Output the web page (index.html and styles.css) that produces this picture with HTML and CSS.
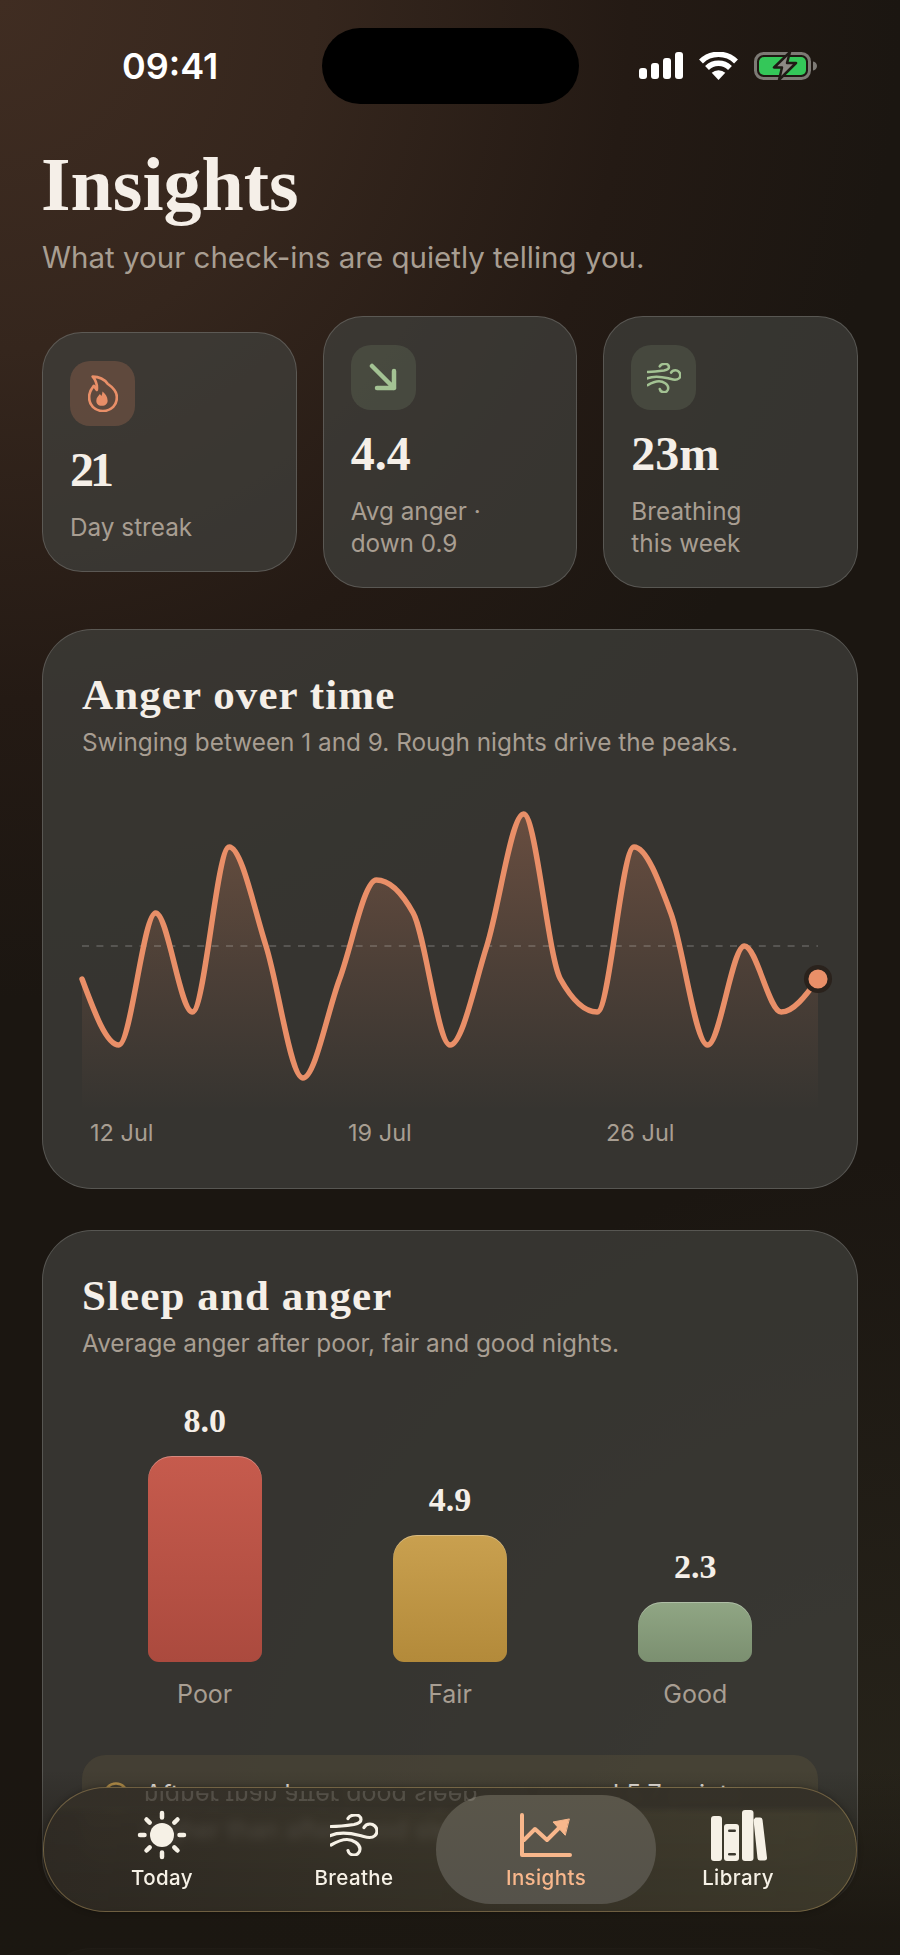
FILE: index.html
```html
<!DOCTYPE html>
<html lang="en">
<head>
    <meta charset="UTF-8">
    <meta name="viewport" content="width=device-width, initial-scale=1.0">
    <title>Insights</title>
    <link rel="stylesheet" href="styles.css">
</head>
<body>
    <div class="screen">
        <div class="status">
            <div class="time">09:41</div>
            <div class="island"></div>
            <div class="status-icons">
                <svg width="44" height="28" viewBox="0 0 44 28" fill="#fff">
                    <rect x="0" y="16" width="8" height="11" rx="3"/>
                    <rect x="12" y="11" width="8" height="16" rx="3"/>
                    <rect x="24" y="6" width="8" height="21" rx="3"/>
                    <rect x="36" y="0" width="8" height="27" rx="3"/>
                </svg>
                <svg width="39" height="28" viewBox="0 0 39 28" fill="none" stroke="#fff">
                    <path d="M2 9.5a25 25 0 0 1 35 0" stroke-width="5.5"/>
                    <path d="M8 16a16.500 16.500 0 0 1 23 0" stroke-width="5.500"/>
                    <path d="M19.500 28l-6.800-7.200a10 10 0 0 1 13.600 0z" fill="#fff" stroke="none"/>
                </svg>
                <svg width="63" height="28" viewBox="0 0 63 28" fill="none">
                    <rect x="1.500" y="1.500" width="54" height="25" rx="8" stroke="#7d7a75" stroke-width="3"/>
                    <rect x="5" y="5" width="47" height="18" rx="5" fill="#34c759"/>
                    <path d="M59 9.500c2.500.5 4 2.300 4 4.500s-1.500 4-4 4.500z" fill="#7d7a75"/>
                    <path d="M36 0L20 15.500h8L25 28l17-17h-9z" fill="#8d8a85" stroke="#1f1a15" stroke-width="2.500" stroke-linejoin="round"/>
                </svg>
            </div>
        </div>

        <div class="content">
            <h1 class="page-title">Insights</h1>
            <p class="page-sub">What your check-ins are quietly telling you.</p>

            <div class="stats">
                <div class="stat">
                    <div class="stat-icon orange">
                        <svg width="30" height="37" viewBox="0 0 29 36" fill="none" stroke="#e98f68" stroke-width="2.600" stroke-linejoin="round">
                            <path d="M14.500 35C6 35 1 29 1 21.500C1 17 3 13.500 5.500 10.500L8.500 14.500C9 10 7.500 5 4.500 1.500C12 1.500 16.500 5 19 8.500C24 12 28 16 28 21.500C28 29 23 35 14.500 35Z"/>
                            <path d="M13.500 30C9.500 30 8 27.500 8 25C8 22 10 20.500 11.500 18.500L13 20.500C13.500 19 14 17.500 14 16C16.500 18 19 21 19 25C19 27.500 17 30 13.500 30Z" fill="#e98f68" stroke="none"/>
                        </svg>
                    </div>
                    <div class="stat-value tight">21</div>
                    <div class="stat-label">Day streak</div>
                </div>
                <div class="stat">
                    <div class="stat-icon green">
                        <svg width="30" height="30" viewBox="0 0 30 30" fill="none" stroke="#a3c293" stroke-width="4.500" stroke-linecap="round" stroke-linejoin="round">
                            <path d="M4 3L26 25M26 8V25H9"/>
                        </svg>
                    </div>
                    <div class="stat-value">4.4</div>
                    <div class="stat-label">Avg anger ·<br>down 0.9</div>
                </div>
                <div class="stat">
                    <div class="stat-icon green">
                        <svg width="34" height="30" viewBox="0 0 48 42" fill="none" stroke="#a3c293" stroke-width="3.600" stroke-linecap="round">
                            <path d="M1 12.500C8 12.500 14 12 24 10.500C29 9.500 31 7.500 31 5.500C31 2.500 28 1 25.500 1C22 1 19 2.500 18 4.500"/>
                            <path d="M.5 21.500C10 17.500 22 19.500 30 21.500C34 22.500 37 23.500 39.500 23.500C44 23.500 47 20.500 47 17C47 13 43.500 10 40 10C37 10 35 11.500 34 13.500"/>
                            <path d="M1 31C7 27.500 12 25.500 17 25.500C23 25.500 30 30 30 35C30 38.500 27 41 24 41C21 41 18.500 39 18 36.500"/>
                        </svg>
                    </div>
                    <div class="stat-value">23m</div>
                    <div class="stat-label">Breathing<br>this week</div>
                </div>
            </div>

            <section class="card">
                <h2 class="card-title">Anger over time</h2>
                <p class="card-sub">Swinging between 1 and 9. Rough nights drive the peaks.</p>
                <svg class="line-chart" width="736" height="310" viewBox="0 0 736 310" fill="none">
                    <defs>
                        <linearGradient id="area" x1="0" y1="0" x2="0" y2="1">
                            <stop offset="0" stop-color="#e98f68" stop-opacity="0.28"/>
                            <stop offset="0.5" stop-color="#e98f68" stop-opacity="0.13"/>
                            <stop offset="1" stop-color="#e98f68" stop-opacity="0"/>
                        </linearGradient>
                    </defs>
                    <path fill="url(#area)" d="M0 178C12.270 211 24.530 244 36.800 244C49.070 244 61.330 112 73.600 112C85.870 112 98.130 211 110.400 211C122.670 211 134.930 46 147.200 46C159.470 46 171.730 106.500 184 145C196.270 183.500 208.530 277 220.800 277C233.070 277 245.330 211 257.600 178C269.870 145 282.130 79 294.400 79C306.670 79 318.930 90 331.200 112C343.470 134 355.730 244 368 244C380.270 244 392.530 183.500 404.800 145C417.070 106.500 429.330 13 441.600 13C453.870 13 466.130 156 478.400 178C490.670 200 502.930 211 515.200 211C527.470 211 539.730 46 552 46C564.270 46 576.530 79 588.800 112C601.070 145 613.330 244 625.600 244C637.870 244 650.130 145 662.400 145C674.670 145 686.930 211 699.200 211C711.470 211 723.730 194.500 736 178L736 310L0 310Z"/>
                    <line x1="0" y1="145" x2="736" y2="145" stroke="#fff" stroke-opacity="0.22" stroke-width="1.500" stroke-dasharray="7 7.400"/>
                    <path stroke="#e98f68" stroke-width="5.500" stroke-linecap="round" d="M0 178C12.270 211 24.530 244 36.800 244C49.070 244 61.330 112 73.600 112C85.870 112 98.130 211 110.400 211C122.670 211 134.930 46 147.200 46C159.470 46 171.730 106.500 184 145C196.270 183.500 208.530 277 220.800 277C233.070 277 245.330 211 257.600 178C269.870 145 282.130 79 294.400 79C306.670 79 318.930 90 331.200 112C343.470 134 355.730 244 368 244C380.270 244 392.530 183.500 404.800 145C417.070 106.500 429.330 13 441.600 13C453.870 13 466.130 156 478.400 178C490.670 200 502.930 211 515.200 211C527.470 211 539.730 46 552 46C564.270 46 576.530 79 588.800 112C601.070 145 613.330 244 625.600 244C637.870 244 650.130 145 662.400 145C674.670 145 686.930 211 699.200 211C711.470 211 723.730 194.500 736 178"/>
                    <circle cx="736" cy="178" r="11.800" fill="#e98f68" stroke="#2a221c" stroke-width="4.500"/>
                </svg>
                <div class="axis">
                    <span>12 Jul</span>
                    <span>19 Jul</span>
                    <span>26 Jul</span>
                </div>
            </section>

            <section class="card">
                <h2 class="card-title">Sleep and anger</h2>
                <p class="card-sub">Average anger after poor, fair and good nights.</p>
                <div class="bars">
                    <div class="bar-col">
                        <div class="bar-value">8.0</div>
                        <div class="bar poor" style="height: 206px"></div>
                        <div class="bar-label">Poor</div>
                    </div>
                    <div class="bar-col">
                        <div class="bar-value">4.9</div>
                        <div class="bar fair" style="height: 127px"></div>
                        <div class="bar-label">Fair</div>
                    </div>
                    <div class="bar-col">
                        <div class="bar-value">2.3</div>
                        <div class="bar good" style="height: 60px"></div>
                        <div class="bar-label">Good</div>
                    </div>
                </div>
                <div class="callout">
                    <svg class="callout-icon" width="26" height="26" viewBox="0 0 26 26" fill="none" stroke="#b8924a" stroke-width="2.500">
                        <circle cx="13" cy="13" r="11.500"/>
                    </svg>
                    <p class="callout-text">After poor sleep your anger runs around 5.7 points higher than after good sleep.</p>
                </div>
            </section>

            <section class="card card-next"></section>
        </div>

        <div class="fade"></div>

        <nav class="tabbar">
            <div class="refract" aria-hidden="true"><span>higher than after good sleep</span></div>
            <a class="tab">
                <span class="tab-icon">
                    <svg width="50" height="50" viewBox="0 0 50 50" fill="#f6f1e6" stroke="#f6f1e6" stroke-width="4.500" stroke-linecap="round">
                        <circle cx="25" cy="25" r="12" stroke="none"/>
                        <path d="M25 3V7.500M25 42.500V47M3 25H7.500M42.500 25H47M9.500 9.500L12.700 12.700M37.300 37.300L40.500 40.500M9.500 40.500L12.700 37.300M37.300 12.700L40.500 9.500"/>
                    </svg>
                </span>
                <span class="tab-label">Today</span>
            </a>
            <a class="tab">
                <span class="tab-icon">
                    <svg width="48" height="42" viewBox="0 0 48 42" fill="none" stroke="#f6f1e6" stroke-width="3.200" stroke-linecap="round">
                        <path d="M1 12.500C8 12.500 14 12 24 10.500C29 9.500 31 7.500 31 5.500C31 2.500 28 1 25.500 1C22 1 19 2.500 18 4.500"/>
                        <path d="M.5 21.500C10 17.500 22 19.500 30 21.500C34 22.500 37 23.500 39.500 23.500C44 23.500 47 20.500 47 17C47 13 43.500 10 40 10C37 10 35 11.500 34 13.500"/>
                        <path d="M1 31C7 27.500 12 25.500 17 25.500C23 25.500 30 30 30 35C30 38.500 27 41 24 41C21 41 18.500 39 18 36.500"/>
                    </svg>
                </span>
                <span class="tab-label">Breathe</span>
            </a>
            <a class="tab active">
                <span class="tab-icon">
                    <svg width="52" height="44" viewBox="0 0 52 44" fill="none" stroke="#f8b78c" stroke-width="4" stroke-linecap="round" stroke-linejoin="round">
                        <path d="M2 2V42H50"/>
                        <path d="M4 27L15 16L27 27L41 13"/>
                        <path d="M49 6L33 9L45 22Z" fill="#f8b78c" stroke-width="1"/>
                    </svg>
                </span>
                <span class="tab-label">Insights</span>
            </a>
            <a class="tab">
                <span class="tab-icon">
                    <svg width="57" height="51" viewBox="0 0 57 51" fill="#f6f1e6">
                        <rect x="1" y="6" width="11" height="45" rx="3"/>
                        <path d="M17 14h9a3 3 0 0 1 3 3v31a3 3 0 0 1-3 3h-9a3 3 0 0 1-3-3V17a3 3 0 0 1 3-3z"/>
                        <rect x="32" y="0" width="11.500" height="51" rx="3"/>
                        <path d="M45.500 7.500h4.500a2.500 2.500 0 0 1 2.500 2.200L57 47.800a2.500 2.500 0 0 1-2.400 2.700H50a2.500 2.500 0 0 1-2.500-2.200L43.500 9.800z"/>
                        <rect x="18" y="19.500" width="8" height="2.600" rx="1.300" fill="#3b382e"/>
                        <rect x="18" y="43" width="8" height="2.600" rx="1.300" fill="#3b382e"/>
                    </svg>
                </span>
                <span class="tab-label">Library</span>
            </a>
        </nav>
    </div>
</body>
</html>
```

FILE: styles.css
```css
* {
    box-sizing: border-box;
}
body {
    margin: 0;
    background: #1b1611;
    font-family: 'Inter', 'Noto Sans', sans-serif;
    color: #f5efe8;
}
.screen {
    position: relative;
    width: 900px;
    height: 1955px;
    overflow: hidden;
    background:
        radial-gradient(ellipse 900px 1000px at 0 0, #402d22 0%, #35261d 35%, #241a14 70%, rgba(28, 23, 18, 0) 100%),
        radial-gradient(ellipse 700px 800px at 100% 100%, #29261c 0%, rgba(28, 23, 18, 0) 100%),
        #1b1611;
}

/* status bar */
.status {
    display: grid;
    grid-template-columns: 322px 257px 1fr;
    padding-top: 28px;
    height: 103px;
}
.time {
    padding-left: 122px;
    font-size: 36px;
    font-weight: 600;
    line-height: 76px;
    color: #fff;
}
.island {
    background: #000;
    border-radius: 38px;
}
.status-icons {
    display: flex;
    align-items: flex-start;
    gap: 16px;
    padding: 24px 0 0 60px;
}

.content {
    padding: 0 42px;
}
.page-title {
    margin: 39px 0 0 -1px;
    font-family: 'Liberation Serif', serif;
    font-size: 76px;
    font-weight: 700;
    line-height: 84px;
}
.page-sub {
    margin: 11px 0 0;
    font-size: 29.5px;
    line-height: 40px;
    color: #a89e92;
}

/* stat cards */
.stats {
    display: flex;
    align-items: center;
    gap: 26px;
    margin-top: 39px;
}
.stat {
    flex: 1;
    padding: 28px 27px;
    background: rgba(63, 63, 60, 0.74);
    border: 1.5px solid rgba(255, 255, 255, 0.17);
    border-radius: 40px;
}
.stat-icon {
    display: flex;
    align-items: center;
    justify-content: center;
    width: 65px;
    height: 65px;
    border-radius: 20px;
}
.stat-icon.orange {
    background: rgba(233, 143, 104, 0.2);
}
.stat-icon.green {
    background: rgba(163, 194, 147, 0.14);
}
.stat-value {
    margin-top: 18px;
    font-family: 'Liberation Serif', serif;
    font-size: 48px;
    font-weight: 700;
    line-height: 52px;
}
.stat-value.tight {
    letter-spacing: -4px;
}
.stat-label {
    margin-top: 15px;
    font-size: 24.3px;
    line-height: 32px;
    color: #a89e92;
}

/* big cards */
.card {
    margin-top: 41px;
    padding: 40px 39px;
    background: rgba(63, 63, 60, 0.74);
    border: 1.5px solid rgba(255, 255, 255, 0.17);
    border-radius: 50px;
}
.card-title {
    margin: 0;
    font-family: 'Liberation Serif', serif;
    font-size: 43px;
    font-weight: 700;
    line-height: 50px;
    letter-spacing: 1.1px;
}
.card-sub {
    margin: 6px 0 0;
    font-size: 24.35px;
    line-height: 32px;
    color: #a89e92;
}
.line-chart {
    display: block;
    margin-top: 43px;
    overflow: visible;
}
.axis {
    display: flex;
    margin-top: 7px;
    padding-left: 8px;
    font-size: 23.5px;
    line-height: 30px;
    color: #a89e92;
}
.axis span {
    flex: 0 0 258px;
}

/* sleep bars */
.bars {
    display: grid;
    grid-template-columns: repeat(3, 1fr);
    align-items: end;
    margin-top: 42px;
}
.bar-col {
    display: flex;
    flex-direction: column;
    align-items: center;
}
.bar-value {
    font-family: 'Liberation Serif', serif;
    font-size: 34px;
    font-weight: 700;
    line-height: 40px;
}
.bar {
    width: 114px;
    margin-top: 15px;
    border-radius: 24px 24px 11px 11px;
    box-shadow: inset 0 1px 0 rgba(255, 255, 255, 0.28);
}
.bar.poor {
    background: linear-gradient(180deg, #c65b4d, #ab4a3e);
}
.bar.fair {
    background: linear-gradient(180deg, #c9a04f, #b38a3a);
}
.bar.good {
    background: linear-gradient(180deg, #90a684, #7b8f70);
}
.bar-label {
    margin-top: 16px;
    font-size: 25px;
    line-height: 32px;
    color: #a89e92;
}
.callout {
    display: flex;
    align-items: flex-start;
    gap: 16px;
    margin: 45px 0 0;
    padding: 21px 21px 18px;
    background: rgba(200, 165, 90, 0.1);
    border-radius: 24px;
}
.callout-icon {
    flex: none;
    margin-top: 6px;
}
.callout-text {
    margin: 0;
    font-size: 25px;
    line-height: 36px;
    color: #f5efe8;
}
.card-next {
    height: 300px;
}

/* everything scrolling under the tab bar goes dim */
.fade {
    position: absolute;
    left: 0;
    right: 0;
    top: 1770px;
    bottom: 0;
    background: linear-gradient(180deg, rgba(27, 23, 17, 0) 0%, rgba(27, 23, 17, 0.93) 85%);
}

/* tab bar */
.tabbar {
    position: absolute;
    left: 43px;
    right: 43px;
    bottom: 43px;
    display: grid;
    grid-template-columns: repeat(4, 192px);
    padding: 7px 22px;
    background:
        linear-gradient(180deg, rgba(52, 48, 40, 0.96) 0, rgba(52, 48, 40, 0.96) 18px, rgba(52, 48, 40, 0) 26px),
        linear-gradient(100deg, rgba(48, 43, 36, 0.8), rgba(66, 62, 46, 0.82));
    border: 1.5px solid rgba(190, 160, 100, 0.42);
    border-radius: 63px;
    box-shadow: 0 0 6px rgba(0, 0, 0, 0.3);
    -webkit-backdrop-filter: blur(5px);
    backdrop-filter: blur(5px);
}
.refract {
    position: absolute;
    left: 100px;
    top: 3px;
    height: 10px;
    overflow: hidden;
    font-size: 25px;
    line-height: 10px;
    color: rgba(245, 239, 232, 0.16);
    filter: blur(0.7px);
    white-space: nowrap;
}
.refract span {
    display: block;
    transform: scaleY(-1);
}
.tab {
    display: flex;
    flex-direction: column;
    align-items: center;
    height: 109px;
    padding-top: 14px;
    color: #f6f1e6;
}
.tab.active {
    margin: 0 -14px;
    color: #f8b78c;
    background: linear-gradient(180deg, #5a564a, #55524a);
    border-radius: 55px;
}
.tab-icon {
    display: flex;
    align-items: center;
    justify-content: center;
    height: 52px;
}
.tab-label {
    margin-top: 4px;
    font-size: 20.5px;
    font-weight: 500;
    line-height: 26px;
    letter-spacing: 0.4px;
}
```
